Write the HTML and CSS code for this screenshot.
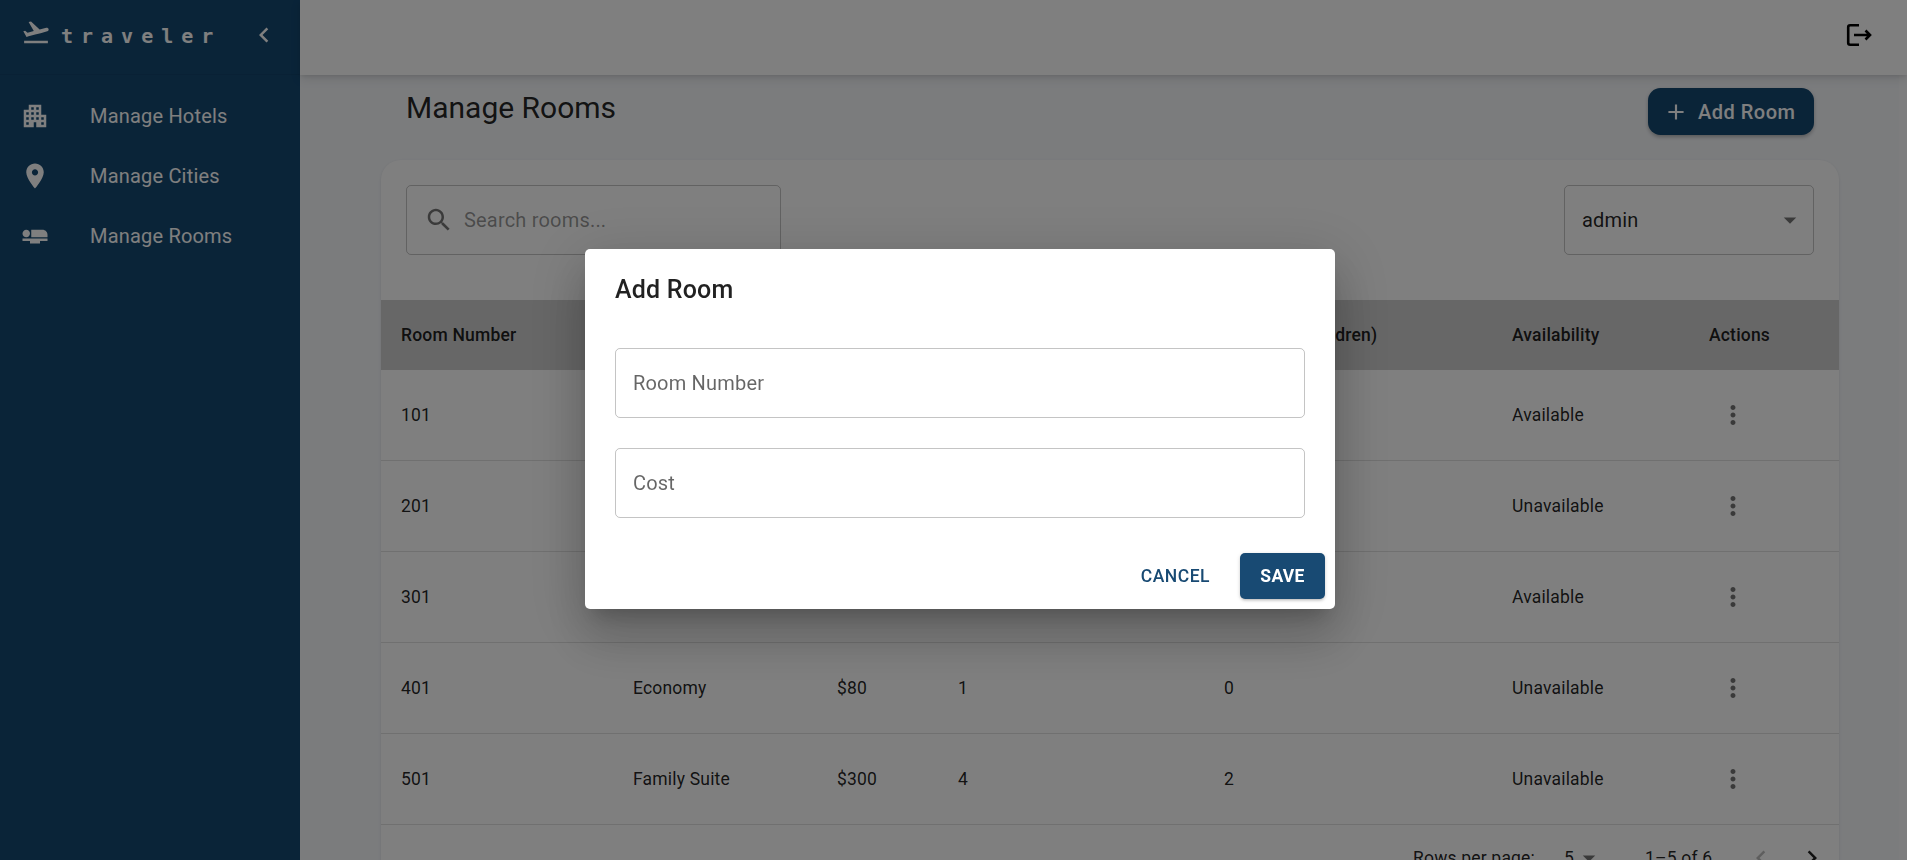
FILE: index.html
```html
<!DOCTYPE html>
<html lang="en">
<head>
<meta charset="utf-8">
<title>Manage Rooms</title>
<link rel="stylesheet" href="styles.css">
</head>
<body>
<div class="app">
  <aside class="sidebar">
    <div class="brand">
      <svg class="brand-icon" viewBox="0 0 24 24"><path d="M2.5 19h19v2h-19zm19.57-9.36c-.21-.8-1.04-1.28-1.84-1.06L14.92 10l-6.9-6.43-1.93.51 4.14 7.17-4.97 1.33-1.97-1.54-1.45.39 1.82 3.16.77 1.33 1.6-.43 5.31-1.42 4.35-1.16L21 11.49c.81-.23 1.28-1.05 1.07-1.85z"/></svg>
      <span class="brand-name">traveler</span>
      <svg class="brand-toggle" viewBox="0 0 24 24"><path d="M15.41 7.41 14 6l-6 6 6 6 1.41-1.41L10.83 12z"/></svg>
    </div>
    <nav class="nav">
      <a class="nav-item"><svg class="nav-icon" viewBox="0 0 24 24"><path d="M17 11V3H7v4H3v14h8v-4h2v4h8V11h-4zM7 19H5v-2h2v2zm0-4H5v-2h2v2zm0-4H5V9h2v2zm4 4H9v-2h2v2zm0-4H9V9h2v2zm0-4H9V5h2v2zm4 8h-2v-2h2v2zm0-4h-2V9h2v2zm0-4h-2V5h2v2zm4 12h-2v-2h2v2zm0-4h-2v-2h2v2z"/></svg><span>Manage Hotels</span></a>
      <a class="nav-item"><svg class="nav-icon" viewBox="0 0 24 24"><path d="M12 2C8.13 2 5 5.13 5 9c0 5.25 7 13 7 13s7-7.75 7-13c0-3.87-3.13-7-7-7zm0 9.5c-1.38 0-2.5-1.12-2.5-2.5s1.12-2.5 2.5-2.5 2.5 1.12 2.5 2.5-1.12 2.5-2.5 2.5z"/></svg><span>Manage Cities</span></a>
      <a class="nav-item"><svg class="nav-icon" viewBox="0 0 24 24"><path d="M22 11v2H9V7h9c2.21 0 4 1.79 4 4zM2 14v2h6v2h8v-2h6v-2H2zm5.14-1.9c1.16-1.19 1.14-3.08-.04-4.24-1.19-1.16-3.08-1.14-4.24.04-1.16 1.19-1.14 3.08.04 4.24 1.19 1.16 3.08 1.14 4.24-.04z"/></svg><span>Manage Rooms</span></a>
    </nav>
  </aside>

  <div class="right">
    <header class="appbar">
      <svg class="logout" viewBox="0 0 30 30"><path d="M15 5.2H6.2a2 2 0 0 0-2 2v15.600a2 2 0 0 0 2 2H15M10 15h16M21.500 10.500 26 15l-4.500 4.500"/></svg>
    </header>
    <div class="body">
      <main class="content">
        <div class="page-head">
          <h1 class="page-title">Manage Rooms</h1>
          <button class="add-btn"><svg class="add-icon" viewBox="0 0 24 24"><path d="M19 13h-6v6h-2v-6H5v-2h6V5h2v6h6v2z"/></svg>Add Room</button>
        </div>
        <section class="card">
          <div class="toolbar">
            <div class="search">
              <svg class="search-icon" viewBox="0 0 24 24"><path d="M15.500 14h-.79l-.28-.27C15.410 12.590 16 11.110 16 9.500 16 5.910 13.090 3 9.500 3S3 5.910 3 9.500 5.910 16 9.500 16c1.610 0 3.090-.59 4.230-1.570l.27.28v.79l5 4.990L20.490 19l-4.990-5zm-6 0C7.010 14 5 11.990 5 9.500S7.010 5 9.500 5 14 7.010 14 9.500 11.990 14 9.500 14z"/></svg>
              <span class="search-text">Search rooms...</span>
            </div>
            <div class="select">
              <span>admin</span>
              <svg class="drop" viewBox="0 0 24 24"><path d="m7 10 5 5 5-5z"/></svg>
            </div>
          </div>
          <table class="table">
            <colgroup>
              <col class="c1"><col class="c2"><col class="c3"><col class="c4"><col class="c5"><col class="c6"><col class="c7">
            </colgroup>
            <thead>
              <tr><th>Room Number</th><th>Room Type</th><th>Cost</th><th>Capacity (Adults)</th><th>Capacity (Children)</th><th>Availability</th><th>Actions</th></tr>
            </thead>
            <tbody>
              <tr><td>101</td><td>Standard</td><td>$100</td><td>2</td><td>1</td><td>Available</td><td><svg class="more" viewBox="0 0 24 24"><path d="M12 8c1.100 0 2-.9 2-2s-.9-2-2-2-2 .9-2 2 .9 2 2 2zm0 2c-1.100 0-2 .9-2 2s.9 2 2 2 2-.9 2-2-.9-2-2-2zm0 6c-1.100 0-2 .9-2 2s.9 2 2 2 2-.9 2-2-.9-2-2-2z"/></svg></td></tr>
              <tr><td>201</td><td>Deluxe</td><td>$150</td><td>2</td><td>2</td><td>Unavailable</td><td><svg class="more" viewBox="0 0 24 24"><path d="M12 8c1.100 0 2-.9 2-2s-.9-2-2-2-2 .9-2 2 .9 2 2 2zm0 2c-1.100 0-2 .9-2 2s.9 2 2 2 2-.9 2-2-.9-2-2-2zm0 6c-1.100 0-2 .9-2 2s.9 2 2 2 2-.9 2-2-.9-2-2-2z"/></svg></td></tr>
              <tr><td>301</td><td>Suite</td><td>$250</td><td>3</td><td>2</td><td>Available</td><td><svg class="more" viewBox="0 0 24 24"><path d="M12 8c1.100 0 2-.9 2-2s-.9-2-2-2-2 .9-2 2 .9 2 2 2zm0 2c-1.100 0-2 .9-2 2s.9 2 2 2 2-.9 2-2-.9-2-2-2zm0 6c-1.100 0-2 .9-2 2s.9 2 2 2 2-.9 2-2-.9-2-2-2z"/></svg></td></tr>
              <tr><td>401</td><td>Economy</td><td>$80</td><td>1</td><td>0</td><td>Unavailable</td><td><svg class="more" viewBox="0 0 24 24"><path d="M12 8c1.100 0 2-.9 2-2s-.9-2-2-2-2 .9-2 2 .9 2 2 2zm0 2c-1.100 0-2 .9-2 2s.9 2 2 2 2-.9 2-2-.9-2-2-2zm0 6c-1.100 0-2 .9-2 2s.9 2 2 2 2-.9 2-2-.9-2-2-2z"/></svg></td></tr>
              <tr><td>501</td><td>Family Suite</td><td>$300</td><td>4</td><td>2</td><td>Unavailable</td><td><svg class="more" viewBox="0 0 24 24"><path d="M12 8c1.100 0 2-.9 2-2s-.9-2-2-2-2 .9-2 2 .9 2 2 2zm0 2c-1.100 0-2 .9-2 2s.9 2 2 2 2-.9 2-2-.9-2-2-2zm0 6c-1.100 0-2 .9-2 2s.9 2 2 2 2-.9 2-2-.9-2-2-2z"/></svg></td></tr>
            </tbody>
          </table>
          <div class="pager">
            <span>Rows per page:</span>
            <span class="pager-size">5</span>
            <svg class="pager-drop" viewBox="0 0 24 24"><path d="m7 10 5 5 5-5z"/></svg>
            <span class="pager-range">1–5 of 6</span>
            <svg class="pager-prev" viewBox="0 0 24 24"><path d="M15.410 7.410 14 6l-6 6 6 6 1.410-1.410L10.830 12z"/></svg>
            <svg class="pager-next" viewBox="0 0 24 24"><path d="M10 6 8.590 7.410 13.170 12l-4.580 4.590L10 18l6-6z"/></svg>
          </div>
        </section>
      </main>
      <div class="scroll-track"></div>
    </div>
  </div>
</div>

<div class="overlay">
  <div class="dialog">
    <h2 class="dialog-title">Add Room</h2>
    <div class="dialog-body">
      <div class="field">Room Number</div>
      <div class="field">Cost</div>
    </div>
    <div class="dialog-actions">
      <button class="btn-text">Cancel</button>
      <button class="btn-save">Save</button>
    </div>
  </div>
</div>
</body>
</html>
```

FILE: styles.css
```css
* { box-sizing: border-box; }
html, body { margin: 0; height: 100%; overflow: hidden; }
body { font-family: Roboto, "Liberation Sans", sans-serif; color: rgba(0,0,0,.87); background: #f6f8fb; }
h1, h2 { margin: 0; font-weight: 400; }
button { font-family: inherit; border: 0; cursor: pointer; }
svg { display: block; flex: none; fill: currentColor; }

.app { display: flex; height: 860px; overflow: hidden; }

.sidebar { width: 300px; flex: none; background: #144871; color: #fff; }
.brand { height: 75px; display: flex; align-items: center; padding: 0 0 5px 21px; border-bottom: 1px solid rgba(0,0,0,.06); }
.brand-icon { width: 30px; height: 30px; margin-bottom: 6px; }
.brand-name { font-family: "DejaVu Sans Mono", monospace; font-weight: 700; font-size: 20px; letter-spacing: 8px; margin-left: 10px; width: 188px; margin-top: 2px; }
.brand-toggle { width: 30px; height: 30px; margin-top: 1px; }
.nav { display: flex; flex-direction: column; padding-top: 11px; }
.nav-item { height: 60px; display: flex; align-items: center; padding-left: 20px; font-size: 20px; letter-spacing: .19px; }
.nav-icon { width: 30px; height: 30px; margin-right: 40px; }

.right { flex: 1; min-width: 0; display: flex; flex-direction: column; }
.appbar { height: 75px; flex: none; display: flex; align-items: center; justify-content: flex-end; padding: 0 33px 6px 0; background: #fff; position: relative; z-index: 1;
  box-shadow: 0 2px 4px -1px rgba(0,0,0,.1), 0 4px 10px rgba(0,0,0,.1); }
.logout { width: 30px; height: 30px; fill: none; stroke: #000; stroke-width: 2.6; }

.body { flex: 1; display: flex; min-height: 0; }
.content { flex: 1; min-width: 0; padding: 13px 60px 0 81px; }
.scroll-track { width: 8px; flex: none; background: #fff; opacity: .45; }

.page-head { display: flex; justify-content: space-between; padding: 0 25px; height: 47px; margin-bottom: 25px; }
.page-title { font-size: 30px; line-height: 40px; }
.add-btn { height: 47px; width: 166px; display: flex; align-items: center; padding-left: 15px; border-radius: 12.500px; background: #144871; color: #fff; font-size: 20px; font-weight: 500; letter-spacing: .5px;
  box-shadow: 0 3px 4px -1px rgba(0,0,0,.2), 0 1px 4px rgba(0,0,0,.14); }
.add-icon { width: 26px; height: 26px; margin-right: 9px; }

.card { background: #fff; border-radius: 20px 20px 0 0; box-shadow: 0 1px 3px rgba(0,0,0,.1); }
.toolbar { display: flex; justify-content: space-between; padding: 25px 25px 45px; }
.search, .select { height: 70px; display: flex; align-items: center; border: 1px solid rgba(0,0,0,.23); border-radius: 5px; font-size: 20px; letter-spacing: .19px; }
.search { width: 375px; padding-left: 17px; }
.search-icon { width: 30px; height: 30px; color: rgba(0,0,0,.54); margin-right: 10px; }
.search-text { color: rgba(0,0,0,.42); }
.select { width: 250px; padding: 0 8px 0 17px; justify-content: space-between; }
.drop { width: 30px; height: 30px; color: rgba(0,0,0,.54); }

.table { width: 100%; table-layout: fixed; border-collapse: separate; border-spacing: 0; font-size: 17.500px; letter-spacing: .19px; }
.c1 { width: 232px; } .c2 { width: 204px; } .c3 { width: 121px; } .c4 { width: 266px; } .c5 { width: 288px; } .c6 { width: 197px; } .c7 { width: 150px; }
.table th { height: 70px; padding: 0 20px; background: #cfcfcf; font-weight: 500; text-align: left; }
.table td { height: 91px; padding: 0 20px; border-bottom: 1px solid rgba(224,224,224,1); }
.more { width: 30px; height: 30px; margin-left: 9px; color: rgba(0,0,0,.54); }

.pager { height: 65px; display: flex; align-items: center; padding-left: 1032px; font-size: 17.500px; letter-spacing: .19px; }
.pager-size { margin-left: 29px; }
.pager-drop { width: 30px; height: 30px; color: rgba(0,0,0,.54); }
.pager-range { margin-left: 41px; }
.pager-prev, .pager-next { width: 30px; height: 30px; }
.pager-prev { color: rgba(0,0,0,.26); margin-left: 34px; }
.pager-next { margin-left: 21px; }

.overlay { position: fixed; inset: 0; z-index: 10; background: rgba(0,0,0,.5); }
.dialog { position: absolute; left: 585px; top: 249px; width: 750px; height: 360px; background: #fff; border-radius: 5px;
  box-shadow: 0 14px 19px -9px rgba(0,0,0,.2), 0 30px 48px 4px rgba(0,0,0,.14), 0 11px 58px 10px rgba(0,0,0,.12); }
.dialog-title { font-size: 25px; font-weight: 500; line-height: 40px; padding: 21px 30px 19px; letter-spacing: .19px; }
.dialog-body { padding: 19px 30px 0; display: flex; flex-direction: column; gap: 30px; }
.field { height: 70px; display: flex; align-items: center; padding-left: 17px; border: 1px solid rgba(0,0,0,.23); border-radius: 5px; font-size: 20px; letter-spacing: .19px; color: rgba(0,0,0,.6); }
.dialog-actions { display: flex; justify-content: flex-end; align-items: center; padding: 35px 10px 0; }
.btn-text, .btn-save { height: 46px; font-size: 17.500px; font-weight: 500; letter-spacing: .5px; text-transform: uppercase; border-radius: 5px; }
.btn-text { padding: 0 20px; background: none; color: #184a73; }
.btn-save { width: 85px; padding: 0; margin-left: 10px; background: #184a73; color: #fff; font-weight: 700; letter-spacing: .3px; box-shadow: 0 2px 3px -1px rgba(0,0,0,.2), 0 1px 4px rgba(0,0,0,.14); }
```
